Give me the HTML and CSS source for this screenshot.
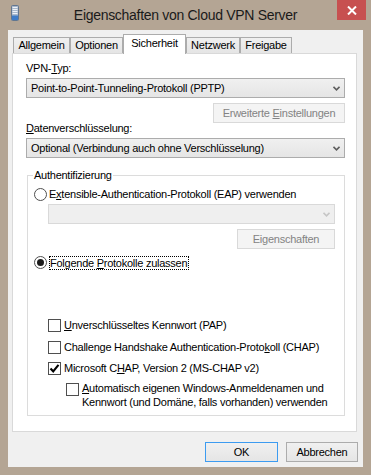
FILE: index.html
```html
<!DOCTYPE html>
<html lang="de">
<head>
    <meta charset="UTF-8">
    <meta name="viewport" content="width=device-width, initial-scale=1.0">
    <title>Eigenschaften von Cloud VPN Server</title>
    <link rel="stylesheet" href="styles.css">
</head>
<body>
<div class="window">
    <div class="titlebar">
        <div class="app-icon">
            <svg width="8" height="16" viewBox="0 0 8 16">
                <rect x="0.5" y="0.5" width="7" height="15" rx="1" fill="#a9b8cc" stroke="#62768f"/>
                <rect x="1.5" y="2" width="5" height="1" fill="#eef2f7"/>
                <rect x="1.5" y="4" width="5" height="1" fill="#eef2f7"/>
                <rect x="1.5" y="6" width="5" height="1" fill="#eef2f7"/>
                <rect x="1.5" y="8" width="5" height="1" fill="#eef2f7"/>
                <rect x="1" y="10.5" width="6" height="4.5" fill="#3f7cc8"/>
            </svg>
        </div>
        <div class="title">Eigenschaften von Cloud VPN Server</div>
        <div class="close">
            <svg width="10" height="9" viewBox="0 0 10 9">
                <path d="M1 0.5 L9 8.5 M9 0.5 L1 8.5" stroke="#fff" stroke-width="2"/>
            </svg>
        </div>
    </div>

    <div class="client">
        <div class="tabs">
            <div class="tab w-allg">Allgemein</div>
            <div class="tab w-opt">Optionen</div>
            <div class="tab active w-sich">Sicherheit</div>
            <div class="tab w-netz">Netzwerk</div>
            <div class="tab w-frei">Freigabe</div>
        </div>

        <div class="panel">
            <div class="label">VPN-<u>T</u>yp:</div>
            <div class="combo">
                <span>Point-to-Point-Tunneling-Protokoll (PPTP)</span>
                <svg class="arrow" width="7" height="5" viewBox="0 0 7 5"><path d="M0.5 0.8 L3.5 3.8 L6.5 0.8" fill="none" stroke="#5e5e5e" stroke-width="1.6"/></svg>
            </div>
            <div class="btn-row">
                <div class="btn disabled wide">Erweiterte <u>E</u>instellungen</div>
            </div>
            <div class="label tight"><u>D</u>atenverschlüsselung:</div>
            <div class="combo">
                <span>Optional (Verbindung auch ohne Verschlüsselung)</span>
                <svg class="arrow" width="7" height="5" viewBox="0 0 7 5"><path d="M0.5 0.8 L3.5 3.8 L6.5 0.8" fill="none" stroke="#5e5e5e" stroke-width="1.6"/></svg>
            </div>

            <fieldset class="group">
                <legend>Authentifizierung</legend>
                <div class="option first">
                    <span class="radio"></span>
                    <span>E<u>x</u>tensible-Authentication-Protokoll (EAP) verwenden</span>
                </div>
                <div class="combo disabled sub">
                    <span></span>
                    <svg class="arrow" width="7" height="5" viewBox="0 0 7 5"><path d="M0.5 0.8 L3.5 3.8 L6.5 0.8" fill="none" stroke="#c6c6c6" stroke-width="1.6"/></svg>
                </div>
                <div class="btn-row sub-btn">
                    <div class="btn disabled small">Ei<u>g</u>enschaften</div>
                </div>
                <div class="option second">
                    <span class="radio checked"></span>
                    <span class="focus">Folgende <u>P</u>rotokolle zulassen</span>
                </div>

                <div class="checks">
                    <div class="option pap">
                        <span class="check"></span>
                        <span><u>U</u>nverschlüsseltes Kennwort (PAP)</span>
                    </div>
                    <div class="option chap">
                        <span class="check"></span>
                        <span>Challenge Handshake Authentication-Proto<u>k</u>oll (CHAP)</span>
                    </div>
                    <div class="option mschap">
                        <span class="check">
                            <svg width="11" height="11" viewBox="0 0 11 11"><path d="M1.5 5.5 L4.2 8.3 L9.5 1.8" fill="none" stroke="#000" stroke-width="2.1"/></svg>
                        </span>
                        <span>Microsoft C<u>H</u>AP, Version 2 (MS-CHAP v2)</span>
                    </div>
                    <div class="option auto">
                        <span class="check"></span>
                        <span class="multi"><u>A</u>utomatisch eigenen Windows-Anmeldenamen und<br>Kennwort (und Domäne, falls vorhanden) verwenden</span>
                    </div>
                </div>
            </fieldset>
        </div>

        <div class="actions">
            <div class="btn default">OK</div>
            <div class="btn">Abbrechen</div>
        </div>
    </div>
</div>
</body>
</html>
```

FILE: styles.css
```css
body {
    margin: 0;
    font-family: "Liberation Sans", Arial, sans-serif;
    font-size: 11px;
    letter-spacing: -0.25px;
    color: #000;
}
.window {
    width: 371px;
    height: 475px;
    background: #b4a594;
    display: flex;
    flex-direction: column;
}

/* title bar */
.titlebar {
    height: 30px;
    display: grid;
    grid-template-columns: 1fr auto 1fr;
}
.app-icon {
    padding: 5px 0 0 11px;
}
.app-icon svg {
    display: block;
}
.title {
    font-size: 14px;
    letter-spacing: -0.3px;
    line-height: 30px;
    color: #1a1a1a;
}
.close {
    justify-self: end;
    align-self: start;
    width: 29px;
    height: 20px;
    margin-right: 5px;
    background: #c75050;
    display: flex;
    align-items: center;
    justify-content: center;
}
.close svg {
    display: block;
}

/* client area */
.client {
    flex: 1;
    margin: 0 8px 8px;
    padding: 4px 6px 5px 4px;
    background: #f0f0f0;
    display: flex;
    flex-direction: column;
}
.tabs {
    display: flex;
    align-items: flex-end;
    height: 20px;
    padding-left: 1px;
}
.tab {
    box-sizing: border-box;
    height: 16px;
    margin-bottom: 1px;
    border: 1px solid #acacac;
    border-bottom: none;
    background: linear-gradient(#f0f0f0, #e5e5e5);
    text-align: center;
    line-height: 15px;
}
.tab.active {
    height: 20px;
    margin-bottom: 0;
    background: #fff;
    position: relative;
    z-index: 1;
    line-height: 17px;
}
.w-allg { width: 57px; }
.w-opt { width: 53px; }
.w-sich { width: 63px; }
.w-netz { width: 54px; }
.w-frei { width: 52px; }

.panel {
    margin-top: -1px;
    height: 379px;
    box-sizing: border-box;
    background: #fff;
    border: 1px solid #d9d9d9;
    padding: 8px 11px 0 13px;
}
.label {
    line-height: 13px;
}
.label.tight {
    margin-top: -1px;
}

/* combo boxes */
.combo {
    box-sizing: border-box;
    height: 20px;
    margin-top: 3px;
    padding: 0 4px;
    border: 1px solid #acacac;
    background: linear-gradient(#f0f0f0, #e5e5e5);
    display: flex;
    align-items: center;
    justify-content: space-between;
    line-height: 13px;
}
.combo .arrow {
    display: block;
}
.combo.disabled {
    border-color: #d9d9d9;
    background: #efefef;
}
.combo.sub {
    margin: 3px 0 0 14px;
}

/* buttons */
.btn-row {
    display: flex;
    justify-content: flex-end;
    margin-top: 5px;
}
.btn {
    box-sizing: border-box;
    height: 20px;
    border: 1px solid #acacac;
    background: linear-gradient(#f0f0f0, #e5e5e5);
    text-align: center;
    line-height: 18px;
}
.btn.disabled {
    border-color: #d9d9d9;
    background: #f4f4f4;
    color: #838383;
}
.btn.wide { width: 132px; }
.btn.small { width: 98px; }
.btn.default {
    border-color: #3c9bf0;
}
.actions {
    display: flex;
    justify-content: flex-end;
    gap: 8px;
    margin: 10px -1px 0 0;
}
.actions .btn {
    width: 73px;
}
.actions .btn + .btn {
    width: 72px;
}

/* group box */
.group {
    margin: 10px 0 0 1px;
    padding: 0 9px 6px 6px;
    min-width: 0;
    border: 1px solid #dcdcdc;
}
.group legend {
    margin-left: -1px;
    padding: 0 1px;
    line-height: 14px;
}
.option {
    display: flex;
    align-items: center;
    height: 13px;
    line-height: 13px;
    white-space: nowrap;
}
.option.first { margin-top: 6px; }
.option.second { margin-top: 7px; }
.radio {
    box-sizing: border-box;
    width: 13px;
    height: 13px;
    margin-right: 2px;
    border: 1px solid #4f4f4f;
    border-radius: 50%;
    background: #fff;
    display: flex;
    align-items: center;
    justify-content: center;
    flex-shrink: 0;
}
.radio.checked::after {
    content: "";
    width: 7px;
    height: 7px;
    border-radius: 50%;
    background: #1c1c1c;
}
.focus {
    border: 1px dotted #000;
    line-height: 12px;
    padding: 0 1px 0 0;
}

.checks {
    margin: 50px 0 0 14px;
}
.check {
    box-sizing: border-box;
    width: 13px;
    height: 13px;
    margin-right: 3px;
    border: 1px solid #4f4f4f;
    background: #fff;
    display: flex;
    align-items: center;
    justify-content: center;
    flex-shrink: 0;
}
.check svg {
    display: block;
}
.option.chap { margin-top: 9px; }
.option.mschap { margin-top: 8px; }
.option.auto {
    margin: 6px 0 0 18px;
    height: auto;
    align-items: flex-start;
}
.option.auto .check {
    margin-top: 2px;
}
.multi {
    line-height: 14px;
}
```
